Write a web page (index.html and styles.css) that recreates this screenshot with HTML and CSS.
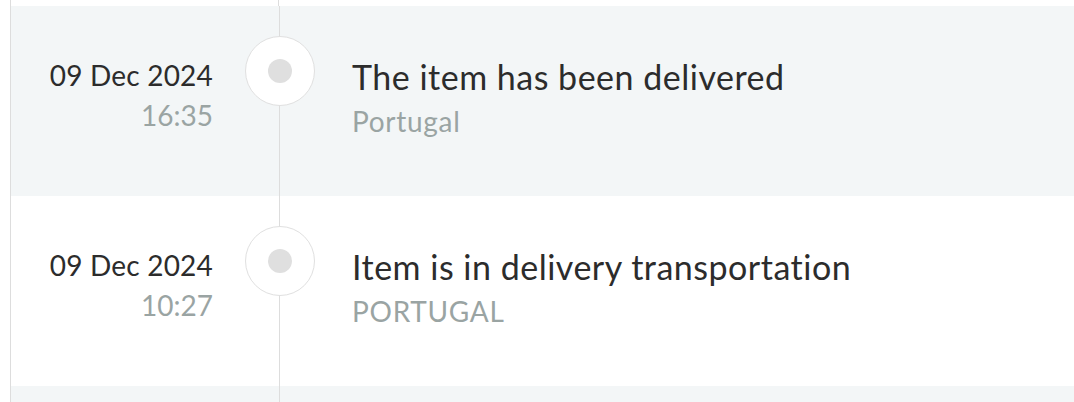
FILE: index.html
```html
<!DOCTYPE html>
<html lang="en">
<head>
    <meta charset="UTF-8">
    <title>Tracking history</title>
    <link rel="stylesheet" href="styles.css">
</head>
<body>
    <ul class="timeline">
        <li class="event event-cut"></li>
        <li class="event">
            <div class="event-date">
                <span class="day">09 Dec 2024</span>
                <span class="time">16:35</span>
            </div>
            <div class="event-marker"><span class="dot"></span></div>
            <div class="event-info">
                <span class="status">The item has been delivered</span>
                <span class="place">Portugal</span>
            </div>
        </li>
        <li class="event">
            <div class="event-date">
                <span class="day">09 Dec 2024</span>
                <span class="time">10:27</span>
            </div>
            <div class="event-marker"><span class="dot"></span></div>
            <div class="event-info">
                <span class="status">Item is in delivery transportation</span>
                <span class="place">PORTUGAL</span>
            </div>
        </li>
        <li class="event">
            <div class="event-date"></div>
            <div class="event-marker"></div>
            <div class="event-info"></div>
        </li>
    </ul>
</body>
</html>
```

FILE: styles.css
```css
body {
    margin: 0;
    background-color: #ffffff;
    font-family: Lato, "Noto Sans", Arial, sans-serif;
    color: #2c2c2c;
}
.timeline {
    list-style: none;
    margin: 0 0 0 10px;
    padding: 0;
    border-left: 1px solid #dddddd;
    height: 402px;
    overflow: hidden;
}
.event {
    display: flex;
    height: 190px;
}
.event:nth-child(even) {
    background-color: #f3f6f7;
}
.event-cut {
    height: 6px;
    background: linear-gradient(#dddddd, #dddddd) 267px 0 / 1px 100% no-repeat;
}
.event-date {
    width: 202px;
    padding-top: 52px;
    text-align: right;
}
.event-date span,
.event-info span {
    display: block;
}
.day {
    font-size: 28px;
    line-height: 34px;
    letter-spacing: 0.2px;
}
.time {
    margin-top: 6px;
    font-size: 28px;
    line-height: 34px;
    color: #9aa4a3;
}
.event-marker {
    width: 70px;
    margin-left: 32px;
    padding-top: 30px;
    background: linear-gradient(#dddddd, #dddddd) 34px 0 / 1px 100% no-repeat;
}
.dot {
    display: flex;
    align-items: center;
    justify-content: center;
    width: 70px;
    height: 70px;
    box-sizing: border-box;
    border: 1.5px solid #e0e0e0;
    border-radius: 50%;
    background-color: #ffffff;
}
.dot::after {
    content: "";
    width: 24px;
    height: 24px;
    border-radius: 50%;
    background-color: #dfdfdf;
}
.event-info {
    padding-left: 37px;
    padding-top: 50px;
}
.status {
    font-size: 34px;
    line-height: 42px;
    letter-spacing: 0.5px;
}
.place {
    margin-top: 6px;
    font-size: 28px;
    line-height: 34px;
    letter-spacing: 0.7px;
    color: #9aa4a3;
}
```
